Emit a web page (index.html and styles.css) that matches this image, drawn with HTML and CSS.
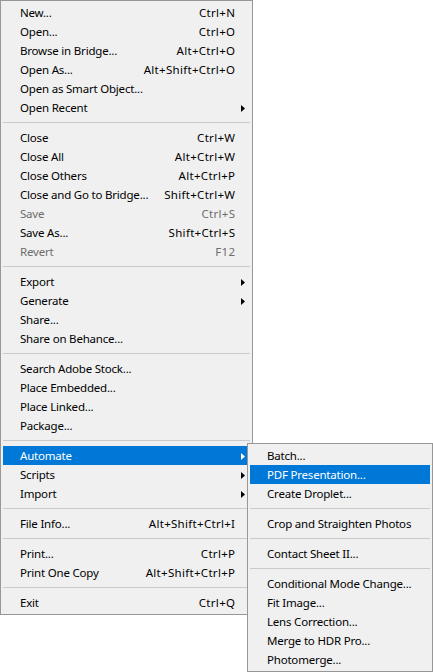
FILE: index.html
```html
<!DOCTYPE html>
<html>
<head>
<meta charset="utf-8">
<link rel="stylesheet" href="styles.css">
</head>
<body>
<div class="stage">
  <div class="menu main">
    <div class="item"><span class="label">New...</span><span class="key">Ctrl+N</span><span class="arr"></span></div>
    <div class="item"><span class="label">Open...</span><span class="key">Ctrl+O</span><span class="arr"></span></div>
    <div class="item"><span class="label">Browse in Bridge...</span><span class="key">Alt+Ctrl+O</span><span class="arr"></span></div>
    <div class="item"><span class="label">Open As...</span><span class="key">Alt+Shift+Ctrl+O</span><span class="arr"></span></div>
    <div class="item"><span class="label">Open as Smart Object...</span><span class="key"></span><span class="arr"></span></div>
    <div class="item"><span class="label">Open Recent</span><span class="key"></span><span class="arr"><svg width="4" height="7" viewBox="0 0 4 7"><path d="M0 0L4 3.5L0 7Z"/></svg></span></div>
    <div class="sep"></div>
    <div class="item"><span class="label">Close</span><span class="key">Ctrl+W</span><span class="arr"></span></div>
    <div class="item"><span class="label">Close All</span><span class="key">Alt+Ctrl+W</span><span class="arr"></span></div>
    <div class="item"><span class="label">Close Others</span><span class="key">Alt+Ctrl+P</span><span class="arr"></span></div>
    <div class="item"><span class="label">Close and Go to Bridge...</span><span class="key">Shift+Ctrl+W</span><span class="arr"></span></div>
    <div class="item disabled"><span class="label">Save</span><span class="key">Ctrl+S</span><span class="arr"></span></div>
    <div class="item"><span class="label">Save As...</span><span class="key">Shift+Ctrl+S</span><span class="arr"></span></div>
    <div class="item disabled"><span class="label">Revert</span><span class="key">F12</span><span class="arr"></span></div>
    <div class="sep"></div>
    <div class="item"><span class="label">Export</span><span class="key"></span><span class="arr"><svg width="4" height="7" viewBox="0 0 4 7"><path d="M0 0L4 3.5L0 7Z"/></svg></span></div>
    <div class="item"><span class="label">Generate</span><span class="key"></span><span class="arr"><svg width="4" height="7" viewBox="0 0 4 7"><path d="M0 0L4 3.5L0 7Z"/></svg></span></div>
    <div class="item"><span class="label">Share...</span><span class="key"></span><span class="arr"></span></div>
    <div class="item"><span class="label">Share on Behance...</span><span class="key"></span><span class="arr"></span></div>
    <div class="sep"></div>
    <div class="item"><span class="label">Search Adobe Stock...</span><span class="key"></span><span class="arr"></span></div>
    <div class="item"><span class="label">Place Embedded...</span><span class="key"></span><span class="arr"></span></div>
    <div class="item"><span class="label">Place Linked...</span><span class="key"></span><span class="arr"></span></div>
    <div class="item"><span class="label">Package...</span><span class="key"></span><span class="arr"></span></div>
    <div class="sep"></div>
    <div class="item active"><span class="label">Automate</span><span class="key"></span><span class="arr"><svg width="4" height="7" viewBox="0 0 4 7"><path d="M0 0L4 3.5L0 7Z"/></svg></span></div>
    <div class="item"><span class="label">Scripts</span><span class="key"></span><span class="arr"><svg width="4" height="7" viewBox="0 0 4 7"><path d="M0 0L4 3.5L0 7Z"/></svg></span></div>
    <div class="item"><span class="label">Import</span><span class="key"></span><span class="arr"><svg width="4" height="7" viewBox="0 0 4 7"><path d="M0 0L4 3.5L0 7Z"/></svg></span></div>
    <div class="sep"></div>
    <div class="item"><span class="label">File Info...</span><span class="key">Alt+Shift+Ctrl+I</span><span class="arr"></span></div>
    <div class="sep"></div>
    <div class="item"><span class="label">Print...</span><span class="key">Ctrl+P</span><span class="arr"></span></div>
    <div class="item"><span class="label">Print One Copy</span><span class="key">Alt+Shift+Ctrl+P</span><span class="arr"></span></div>
    <div class="sep"></div>
    <div class="item"><span class="label">Exit</span><span class="key">Ctrl+Q</span><span class="arr"></span></div>
  </div>

  <div class="menu sub">
    <div class="item"><span class="label">Batch...</span></div>
    <div class="item active"><span class="label">PDF Presentation...</span></div>
    <div class="item"><span class="label">Create Droplet...</span></div>
    <div class="sep"></div>
    <div class="item"><span class="label">Crop and Straighten Photos</span></div>
    <div class="sep"></div>
    <div class="item"><span class="label">Contact Sheet II...</span></div>
    <div class="sep"></div>
    <div class="item"><span class="label">Conditional Mode Change...</span></div>
    <div class="item"><span class="label">Fit Image...</span></div>
    <div class="item"><span class="label">Lens Correction...</span></div>
    <div class="item"><span class="label">Merge to HDR Pro...</span></div>
    <div class="item"><span class="label">Photomerge...</span></div>
  </div>
</div>
</body>
</html>
```

FILE: styles.css
```css
html, body {
  margin: 0;
  padding: 0;
  background: #ffffff;
}

body {
  font-family: "Noto Sans", "Open Sans", sans-serif;
  font-size: 11.5px;
  letter-spacing: -0.2px;
  color: #000000;
}

.stage {
  position: relative;
  width: 433px;
  height: 672px;
  overflow: hidden;
}

.menu {
  box-sizing: border-box;
  background: #f0f0f0;
  border: 1px solid #979797;
  padding: 2px;
  display: flex;
  flex-direction: column;
}

.main {
  width: 253px;
}

.sub {
  position: absolute;
  left: 247px;
  top: 443px;
  width: 186px;
}

.item {
  height: 19px;
  line-height: 20px;
  display: grid;
  grid-template-columns: 1fr auto 15px;
  padding-left: 17px;
  white-space: nowrap;
}

.sub .item {
  display: flex;
}

.key {
  letter-spacing: 0.3px;
  margin-right: -0.3px;
}

.item.active {
  background: #0078d7;
  color: #ffffff;
}

.item.disabled {
  color: #6d6d6d;
}

.arr {
  display: flex;
  align-items: center;
  padding-left: 6px;
}

.arr svg {
  fill: #000000;
}

.item.active .arr svg {
  fill: #ffffff;
}

.sep {
  height: 11px;
  display: flex;
  align-items: center;
}

.sep::before {
  content: "";
  display: block;
  width: 100%;
  height: 1px;
  background: #cacaca;
}
```
